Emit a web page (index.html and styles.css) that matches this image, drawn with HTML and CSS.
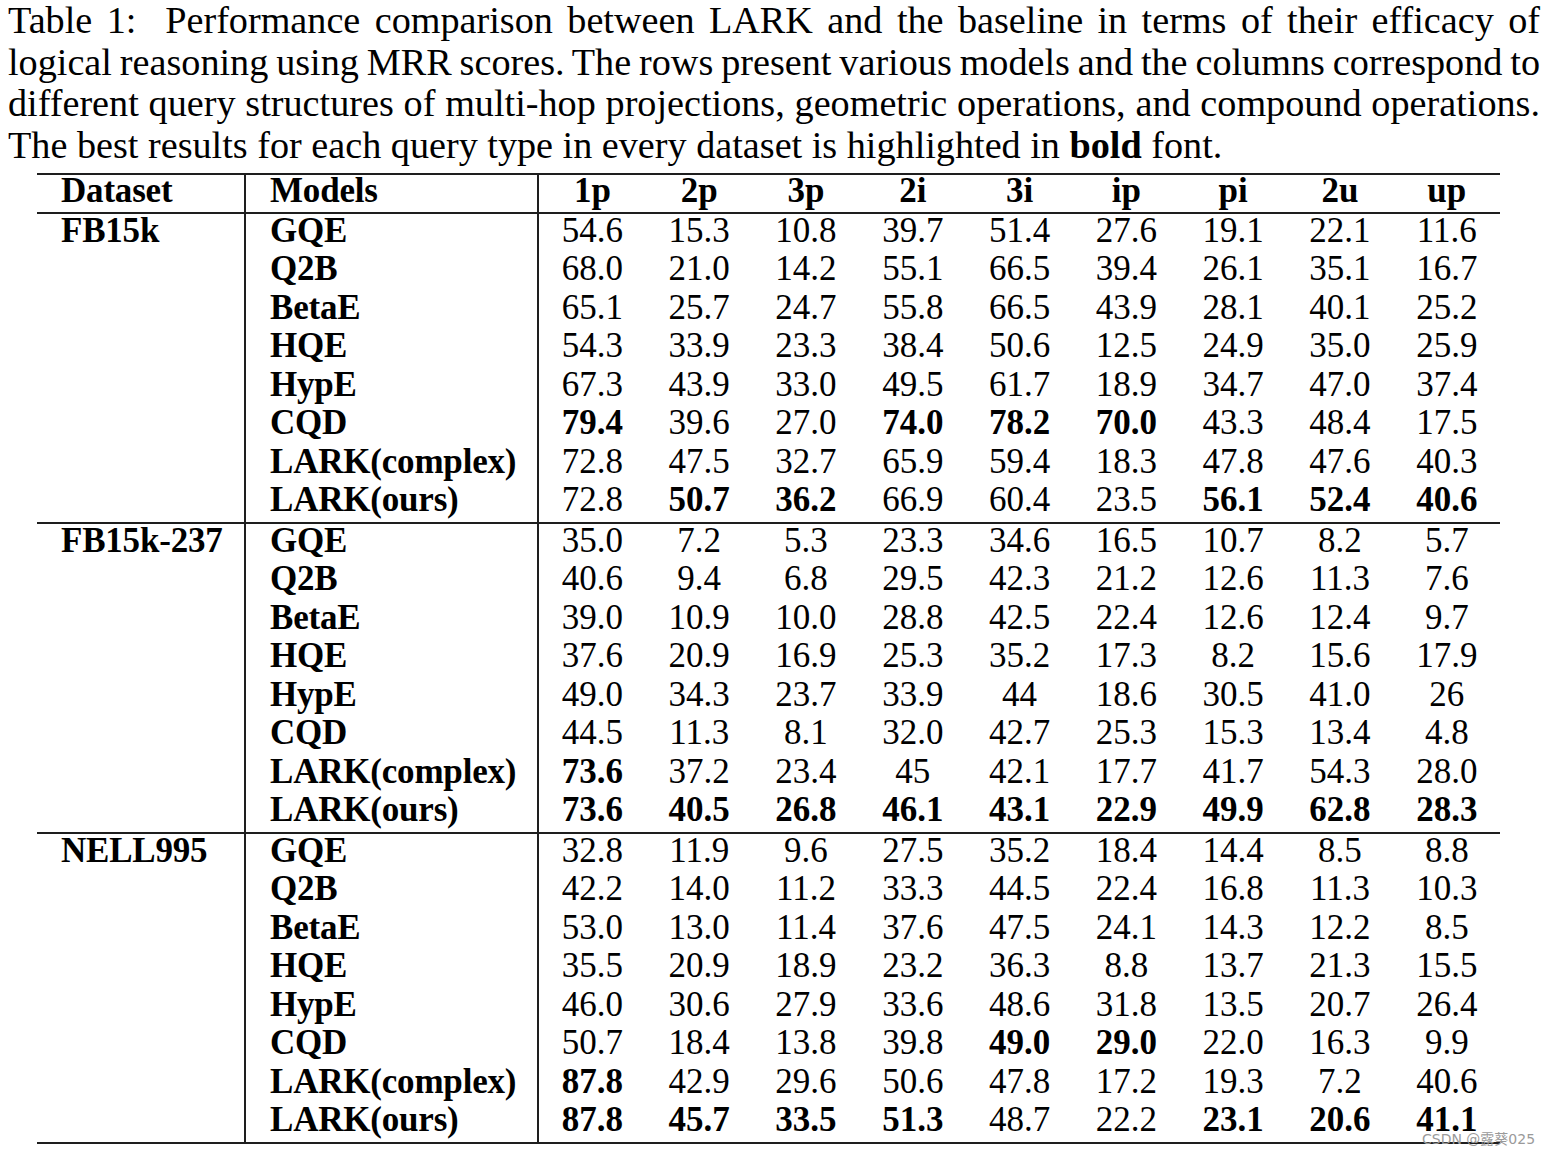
FILE: index.html
```html
<!DOCTYPE html>
<html>
<head>
<meta charset="utf-8">
<link rel="stylesheet" href="styles.css">
</head>
<body>
<div class="page">
  <div class="caption">
    <span class="cline">Table 1:&nbsp; Performance comparison between LARK and the baseline in terms of their efficacy of</span>
    <span class="cline">logical reasoning using MRR scores. The rows present various models and the columns correspond to</span>
    <span class="cline">different query structures of multi-hop projections, geometric operations, and compound operations.</span>
    <span class="cline last">The best results for each query type in every dataset is highlighted in <b>bold</b> font.</span>
  </div>
  <table class="results">
    <colgroup>
      <col class="c-ds"><col class="c-model">
      <col class="c-num"><col class="c-num"><col class="c-num"><col class="c-num"><col class="c-num"><col class="c-num"><col class="c-num"><col class="c-num"><col class="c-num">
    </colgroup>
    <thead>
      <tr>
        <th class="ds">Dataset</th><th class="model">Models</th>
        <th>1p</th><th>2p</th><th>3p</th><th>2i</th><th>3i</th><th>ip</th><th>pi</th><th>2u</th><th>up</th>
      </tr>
    </thead>
    <tbody>
      <tr><td class="ds" rowspan="8">FB15k</td><td class="model">GQE</td><td>54.6</td><td>15.3</td><td>10.8</td><td>39.7</td><td>51.4</td><td>27.6</td><td>19.1</td><td>22.1</td><td>11.6</td></tr>
      <tr><td class="model">Q2B</td><td>68.0</td><td>21.0</td><td>14.2</td><td>55.1</td><td>66.5</td><td>39.4</td><td>26.1</td><td>35.1</td><td>16.7</td></tr>
      <tr><td class="model">BetaE</td><td>65.1</td><td>25.7</td><td>24.7</td><td>55.8</td><td>66.5</td><td>43.9</td><td>28.1</td><td>40.1</td><td>25.2</td></tr>
      <tr><td class="model">HQE</td><td>54.3</td><td>33.9</td><td>23.3</td><td>38.4</td><td>50.6</td><td>12.5</td><td>24.9</td><td>35.0</td><td>25.9</td></tr>
      <tr><td class="model">HypE</td><td>67.3</td><td>43.9</td><td>33.0</td><td>49.5</td><td>61.7</td><td>18.9</td><td>34.7</td><td>47.0</td><td>37.4</td></tr>
      <tr><td class="model">CQD</td><td><b>79.4</b></td><td>39.6</td><td>27.0</td><td><b>74.0</b></td><td><b>78.2</b></td><td><b>70.0</b></td><td>43.3</td><td>48.4</td><td>17.5</td></tr>
      <tr><td class="model">LARK(complex)</td><td>72.8</td><td>47.5</td><td>32.7</td><td>65.9</td><td>59.4</td><td>18.3</td><td>47.8</td><td>47.6</td><td>40.3</td></tr>
      <tr class="end"><td class="model">LARK(ours)</td><td>72.8</td><td><b>50.7</b></td><td><b>36.2</b></td><td>66.9</td><td>60.4</td><td>23.5</td><td><b>56.1</b></td><td><b>52.4</b></td><td><b>40.6</b></td></tr>
    </tbody>
    <tbody>
      <tr><td class="ds" rowspan="8">FB15k-237</td><td class="model">GQE</td><td>35.0</td><td>7.2</td><td>5.3</td><td>23.3</td><td>34.6</td><td>16.5</td><td>10.7</td><td>8.2</td><td>5.7</td></tr>
      <tr><td class="model">Q2B</td><td>40.6</td><td>9.4</td><td>6.8</td><td>29.5</td><td>42.3</td><td>21.2</td><td>12.6</td><td>11.3</td><td>7.6</td></tr>
      <tr><td class="model">BetaE</td><td>39.0</td><td>10.9</td><td>10.0</td><td>28.8</td><td>42.5</td><td>22.4</td><td>12.6</td><td>12.4</td><td>9.7</td></tr>
      <tr><td class="model">HQE</td><td>37.6</td><td>20.9</td><td>16.9</td><td>25.3</td><td>35.2</td><td>17.3</td><td>8.2</td><td>15.6</td><td>17.9</td></tr>
      <tr><td class="model">HypE</td><td>49.0</td><td>34.3</td><td>23.7</td><td>33.9</td><td>44</td><td>18.6</td><td>30.5</td><td>41.0</td><td>26</td></tr>
      <tr><td class="model">CQD</td><td>44.5</td><td>11.3</td><td>8.1</td><td>32.0</td><td>42.7</td><td>25.3</td><td>15.3</td><td>13.4</td><td>4.8</td></tr>
      <tr><td class="model">LARK(complex)</td><td><b>73.6</b></td><td>37.2</td><td>23.4</td><td>45</td><td>42.1</td><td>17.7</td><td>41.7</td><td>54.3</td><td>28.0</td></tr>
      <tr class="end"><td class="model">LARK(ours)</td><td><b>73.6</b></td><td><b>40.5</b></td><td><b>26.8</b></td><td><b>46.1</b></td><td><b>43.1</b></td><td><b>22.9</b></td><td><b>49.9</b></td><td><b>62.8</b></td><td><b>28.3</b></td></tr>
    </tbody>
    <tbody>
      <tr><td class="ds" rowspan="8">NELL995</td><td class="model">GQE</td><td>32.8</td><td>11.9</td><td>9.6</td><td>27.5</td><td>35.2</td><td>18.4</td><td>14.4</td><td>8.5</td><td>8.8</td></tr>
      <tr><td class="model">Q2B</td><td>42.2</td><td>14.0</td><td>11.2</td><td>33.3</td><td>44.5</td><td>22.4</td><td>16.8</td><td>11.3</td><td>10.3</td></tr>
      <tr><td class="model">BetaE</td><td>53.0</td><td>13.0</td><td>11.4</td><td>37.6</td><td>47.5</td><td>24.1</td><td>14.3</td><td>12.2</td><td>8.5</td></tr>
      <tr><td class="model">HQE</td><td>35.5</td><td>20.9</td><td>18.9</td><td>23.2</td><td>36.3</td><td>8.8</td><td>13.7</td><td>21.3</td><td>15.5</td></tr>
      <tr><td class="model">HypE</td><td>46.0</td><td>30.6</td><td>27.9</td><td>33.6</td><td>48.6</td><td>31.8</td><td>13.5</td><td>20.7</td><td>26.4</td></tr>
      <tr><td class="model">CQD</td><td>50.7</td><td>18.4</td><td>13.8</td><td>39.8</td><td><b>49.0</b></td><td><b>29.0</b></td><td>22.0</td><td>16.3</td><td>9.9</td></tr>
      <tr><td class="model">LARK(complex)</td><td><b>87.8</b></td><td>42.9</td><td>29.6</td><td>50.6</td><td>47.8</td><td>17.2</td><td>19.3</td><td>7.2</td><td>40.6</td></tr>
      <tr class="end"><td class="model">LARK(ours)</td><td><b>87.8</b></td><td><b>45.7</b></td><td><b>33.5</b></td><td><b>51.3</b></td><td>48.7</td><td>22.2</td><td><b>23.1</b></td><td><b>20.6</b></td><td><b>41.1</b></td></tr>
    </tbody>
  </table>
  <div class="watermark">CSDN @露葵025</div>
</div>
</body>
</html>
```

FILE: styles.css
```css
html, body {
  margin: 0;
  padding: 0;
  background: #ffffff;
}

body {
  font-family: "Liberation Serif", "Times New Roman", serif;
  color: #000;
}

.page {
  position: relative;
  width: 1548px;
  height: 1154px;
  padding: 0 8px;
  box-sizing: border-box;
}

.caption {
  font-size: 38.2px;
  line-height: 41.6px;
}

.cline {
  display: block;
  white-space: nowrap;
  word-spacing: -3.2px;
  text-align: justify;
  text-align-last: justify;
}

.cline.last {
  word-spacing: 0;
  text-align: left;
  text-align-last: left;
}

.results {
  margin-left: 29px;
  margin-top: 7px;
  width: 1463px;
  border-collapse: separate;
  border-spacing: 0;
  table-layout: fixed;
  font-size: 35px;
}

.c-ds { width: 209px; }
.c-model { width: 293px; }
.c-num { width: 106.8px; }

.results th,
.results td {
  padding: 1.5px 0 7px 0;
  line-height: 30px;
  text-align: center;
  vertical-align: top;
  white-space: nowrap;
}

.results th {
  font-weight: bold;
  padding-top: 1px;
  padding-bottom: 6px;
  border-top: 2px solid #1e1e1e;
  border-bottom: 2px solid #1e1e1e;
}

.results tr.end td,
.results td.ds {
  border-bottom: 2px solid #1e1e1e;
}

.results .ds,
.results .model {
  text-align: left;
  padding-left: 24px;
  font-weight: bold;
  letter-spacing: -0.2px;
  border-right: 2px solid #1e1e1e;
}

.watermark {
  position: absolute;
  left: 1422px;
  top: 1128px;
  font-family: "DejaVu Sans", "Noto Sans CJK SC", sans-serif;
  font-size: 14px;
  color: #9a9a9a;
}
```
